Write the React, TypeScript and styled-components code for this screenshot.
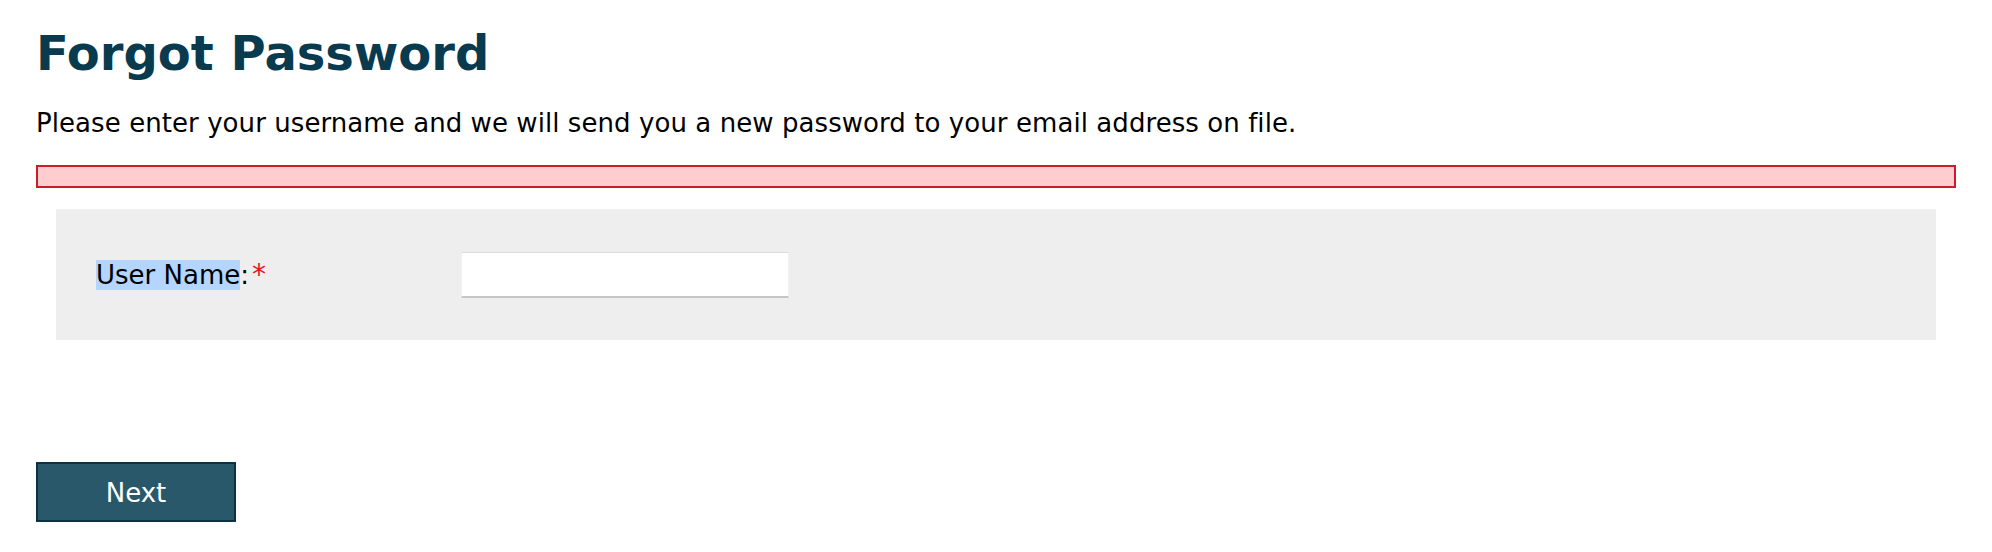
import React from "react";
import styled, { createGlobalStyle } from "styled-components";

const GlobalStyle = createGlobalStyle`
  html, body {
    margin: 0;
    padding: 0;
    background: #ffffff;
  }
  body {
    font-family: "DejaVu Sans", Verdana, sans-serif;
    color: #000000;
  }
`;

const Page = styled.main`
  padding: 25px 36px 0;
`;

const Title = styled.h1`
  margin: 0;
  font-size: 48px;
  line-height: 56px;
  font-weight: 700;
  color: #093a4e;
`;

const Intro = styled.p`
  margin: 27px 0 0;
  font-size: 26px;
  line-height: 30px;
  letter-spacing: 0.07px;
`;

const ErrorBar = styled.div`
  margin-top: 27px;
  height: 23px;
  box-sizing: border-box;
  border: 2px solid #c81e2c;
  background: #ffcccf;
`;

const FormPanel = styled.section`
  margin: 21px 20px 0;
  padding: 43px 40px 42px;
  background: #eeeeee;
`;

const FieldRow = styled.div`
  display: flex;
  align-items: center;
`;

const Label = styled.label`
  width: 365px;
  font-size: 26px;
  line-height: 34px;
`;

const Selected = styled.span`
  background: #b4d5fd;
`;

const Required = styled.span`
  color: #e8101c;
  margin-left: 3px;
  font-size: 28px;
`;

const TextInput = styled.input`
  width: 328px;
  height: 46px;
  box-sizing: border-box;
  margin: 0;
  padding: 0 8px;
  background: #ffffff;
  border: none;
  border-top: 1px solid #dcdcdc;
  border-left: 1px solid #f1f1f1;
  border-right: 1px solid #f1f1f1;
  border-bottom: 2px solid #c6c6c6;
  font-family: inherit;
  font-size: 22px;
  outline: none;
`;

const NextButton = styled.button`
  margin-top: 122px;
  width: 200px;
  height: 60px;
  box-sizing: border-box;
  border: 2px solid #0b3343;
  background: #285869;
  color: #ffffff;
  font-family: "DejaVu Sans", Verdana, sans-serif;
  font-size: 26px;
  line-height: 30px;
  padding: 2px 0 0;
  cursor: pointer;
`;

export default function App() {
  return (
    <>
      <GlobalStyle />
      <Page>
        <Title>Forgot Password</Title>
        <Intro>
          Please enter your username and we will send you a new password to
          your email address on file.
        </Intro>
        <ErrorBar />
        <FormPanel>
          <FieldRow>
            <Label htmlFor="username">
              <Selected>User Name</Selected>:<Required>*</Required>
            </Label>
            <TextInput id="username" type="text" />
          </FieldRow>
        </FormPanel>
        <NextButton type="button">Next</NextButton>
      </Page>
    </>
  );
}
